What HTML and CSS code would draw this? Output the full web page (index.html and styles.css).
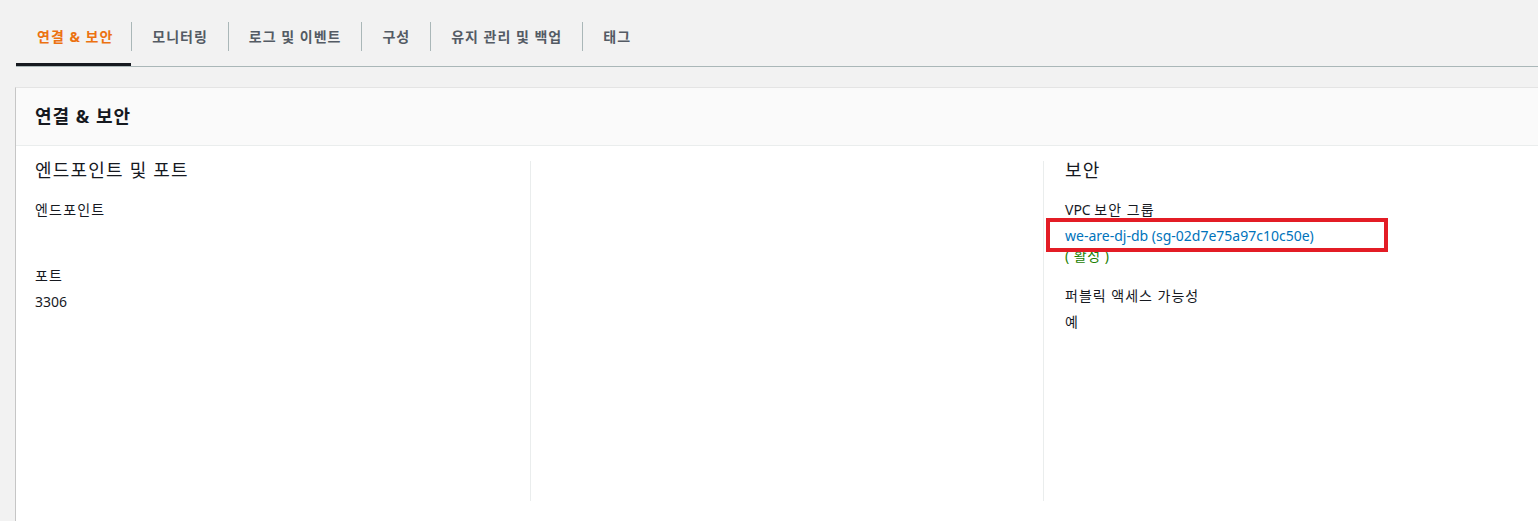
FILE: index.html
```html
<!DOCTYPE html>
<html lang="ko">
<head>
    <meta charset="utf-8">
    <title>연결 &amp; 보안</title>
    <link rel="stylesheet" href="styles.css">
</head>
<body>
    <div class="page">
        <div class="tabs">
            <div class="tab active">연결 &amp; 보안</div>
            <div class="tab">모니터링</div>
            <div class="tab">로그 및 이벤트</div>
            <div class="tab">구성</div>
            <div class="tab">유지 관리 및 백업</div>
            <div class="tab">태그</div>
        </div>

        <div class="card">
            <div class="card-header">
                <h2>연결 &amp; 보안</h2>
            </div>
            <div class="card-body">
                <div class="col">
                    <h3>엔드포인트 및 포트</h3>
                    <div class="field">
                        <div class="label">엔드포인트</div>
                        <div class="value">&nbsp;</div>
                    </div>
                    <div class="field">
                        <div class="label">포트</div>
                        <div class="value">3306</div>
                    </div>
                </div>
                <div class="col"></div>
                <div class="col">
                    <h3>보안</h3>
                    <div class="field">
                        <div class="label">VPC <span class="ko">보안 그룹</span></div>
                        <div class="value">
                            <span class="marked">
                                <a href="#">we-are-dj-db (sg-02d7e75a97c10c50e)</a>
                                <span class="highlight"></span>
                            </span>
                            <div class="status">( 활성 )</div>
                        </div>
                    </div>
                    <div class="field">
                        <div class="label ko">퍼블릭 액세스 가능성</div>
                        <div class="value ko">예</div>
                    </div>
                </div>
            </div>
        </div>
    </div>
</body>
</html>
```

FILE: styles.css
```css
body {
    font-family: "Noto Sans", "Noto Sans CJK KR", sans-serif;
    font-size: 14px;
    background-color: #f2f2f2;
    color: #16191f;
    margin: 0;
    padding: 0;
    overflow: hidden;
}
.page {
    padding: 15px 0 0 16px;
}
/* 한글 글자 간격 (원본 폰트 폭에 맞춤) */
.ko {
    letter-spacing: 1px;
}
/* 탭 */
.tabs {
    display: flex;
    border-bottom: 1px solid #aab7b8;
}
.tab {
    position: relative;
    padding: 12px 20px 19px 21px;
    line-height: 20px;
    font-weight: 700;
    color: #545b64;
    white-space: nowrap;
    letter-spacing: 1px;
}
.tab + .tab::before {
    content: '';
    position: absolute;
    left: 0;
    top: 7px;
    width: 1px;
    height: 29px;
    background-color: #aab7b8;
}
.tab.active {
    color: #ec7211;
    padding-right: 18px;
}
.tab.active::after {
    content: '';
    position: absolute;
    left: 0;
    right: 0;
    bottom: 0;
    height: 3px;
    background-color: #16191f;
}
/* 카드 */
.card {
    width: 1560px;
    margin-top: 20px;
    margin-left: -1px;
    background-color: #ffffff;
    border-left: 1px solid #c6c6c6;
    border-top: 1px solid #e4e4e4;
}
.card-header {
    background-color: #fafafa;
    padding: 17px 20px 18px 19px;
    border-bottom: 1px solid #eaeded;
}
.card-header h2 {
    margin: 0;
    font-size: 18px;
    line-height: 22px;
    font-weight: 700;
    letter-spacing: 1px;
}
.card-body {
    display: grid;
    grid-template-columns: 514px 513px 513px;
    padding: 15px 0 30px 0;
}
.col {
    min-height: 340px;
    padding: 0 20px 0 21px;
    border-left: 1px solid #eaeded;
}
.col:first-child {
    padding-left: 19px;
    border-left: none;
}
.col h3 {
    margin: 0 0 21px 0;
    font-size: 18px;
    line-height: 18px;
    font-weight: 400;
    letter-spacing: 1.2px;
}
.field {
    margin-bottom: 20px;
}
.label {
    line-height: 20px;
    margin-bottom: 6px;
}
.col:first-child .label {
    letter-spacing: 1.2px;
}
.value {
    line-height: 20px;
}
.value a {
    color: #0073bb;
    text-decoration: none;
}
.status {
    color: #1d8102;
    letter-spacing: 0.5px;
}
.marked {
    position: relative;
}
/* 강조 표시 박스 */
.highlight {
    position: absolute;
    left: -19px;
    top: -8px;
    width: 342px;
    height: 34px;
    box-sizing: border-box;
    border: 4px solid #e31c25;
}
```
